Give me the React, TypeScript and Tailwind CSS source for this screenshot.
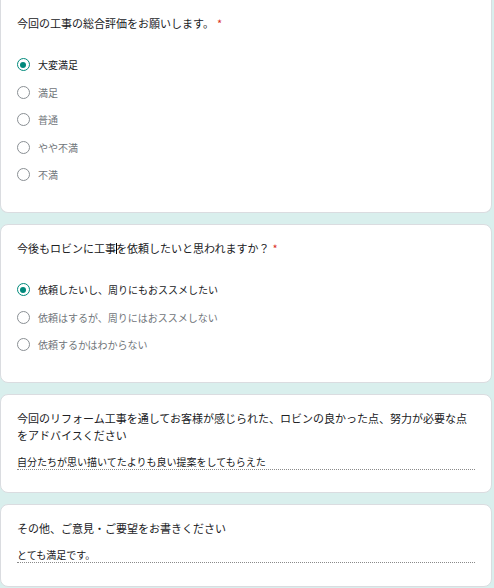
const FONT = { fontFamily: '"Noto Sans CJK JP", Roboto, "Liberation Sans", sans-serif' };

function Radio({ checked }: { checked?: boolean }) {
  return (
    <span
      className={
        "flex h-[13px] w-[13px] shrink-0 items-center justify-center rounded-full border-[1.5px] " +
        (checked ? "border-[#00897b]" : "border-[#8a8f94]")
      }
    >
      {checked && <span className="h-[6px] w-[6px] rounded-full bg-[#00897b]" />}
    </span>
  );
}

function Title({ children, required }: { children: React.ReactNode; required?: boolean }) {
  return (
    <p className="text-[11px] leading-[17px] text-[#202124]">
      {children}
      {required && <span className="ml-[3px] text-[#d93025]">*</span>}
    </p>
  );
}

function Options({ items, selected }: { items: string[]; selected: number }) {
  return (
    <div className="mt-[19px] flex flex-col">
      {items.map((label, i) => (
        <div key={label} className="-ml-[0.5px] flex h-[27.5px] items-center gap-[8.5px]">
          <Radio checked={i === selected} />
          <span className={"text-[10px] " + (i === selected ? "text-[#202124]" : "text-[#70757a]")}>
            {label}
          </span>
        </div>
      ))}
    </div>
  );
}

function Answer({ text }: { text: string }) {
  return (
    <div className="mt-[10px] border-b border-dotted border-[#8a8a8a] text-[10px] leading-[15px] text-[#202124]">
      {text}
    </div>
  );
}

export default function App() {
  return (
    <div className="h-[588px] w-[494px] overflow-hidden bg-[#d9efed] pr-[2px]" style={FONT}>
      <div className="flex flex-col gap-[11px]">
        <section className="h-[213px] rounded-b-lg border border-t-0 border-[#dadce0] bg-white px-4 pt-[15px]">
          <Title required>今回の工事の総合評価をお願いします。</Title>
          <Options items={["大変満足", "満足", "普通", "やや不満", "不満"]} selected={0} />
        </section>

        <section className="h-[159px] rounded-lg border border-[#dadce0] bg-white px-4 pt-[15px]">
          <Title required>
            今後もロビンに工事
            <span className="relative inline-block h-[11px] w-0 align-[-1px]">
              <span className="absolute left-0 top-0 h-[11px] w-px bg-black" />
            </span>
            を依頼したいと思われますか？
          </Title>
          <Options
            items={["依頼したいし、周りにもおススメしたい", "依頼はするが、周りにはおススメしない", "依頼するかはわからない"]}
            selected={0}
          />
        </section>

        <section className="h-[99px] rounded-lg border border-[#dadce0] bg-white px-4 pt-[15px]">
          <Title>今回のリフォーム工事を通してお客様が感じられた、ロビンの良かった点、努力が必要な点をアドバイスください</Title>
          <Answer text="自分たちが思い描いてたよりも良い提案をしてもらえた" />
        </section>

        <section className="h-[83px] rounded-lg border border-[#dadce0] bg-white px-4 pt-[15px]">
          <Title>その他、ご意見・ご要望をお書きください</Title>
          <Answer text="とても満足です。" />
        </section>
      </div>
    </div>
  );
}
